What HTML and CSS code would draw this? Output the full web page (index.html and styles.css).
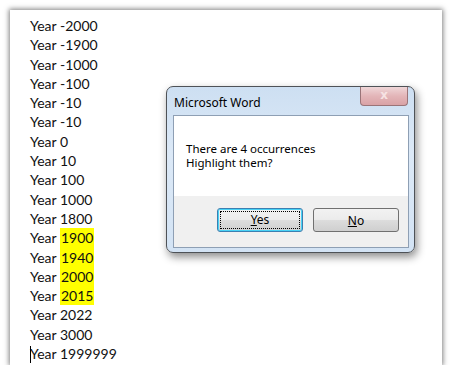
FILE: index.html
```html
<!DOCTYPE html>
<html lang="en">
<head>
    <meta charset="UTF-8">
    <title>Microsoft Word</title>
    <link rel="stylesheet" href="styles.css">
</head>
<body>
    <div class="sheet">
        <ul class="years">
            <li>Year -2000</li>
            <li>Year -1900</li>
            <li>Year -1000</li>
            <li>Year -100</li>
            <li>Year -10</li>
            <li>Year -10</li>
            <li>Year 0</li>
            <li>Year 10</li>
            <li>Year 100</li>
            <li>Year 1000</li>
            <li>Year 1800</li>
            <li>Year <span class="hl">1900</span></li>
            <li>Year <span class="hl">1940</span></li>
            <li>Year <span class="hl">2000</span></li>
            <li>Year <span class="hl">2015</span></li>
            <li>Year 2022</li>
            <li>Year 3000</li>
            <li><span class="caret"></span>Year 1999999</li>
        </ul>
    </div>

    <div class="dialog">
        <div class="titlebar">
            <span class="title">Microsoft Word</span>
            <span class="close">x</span>
        </div>
        <div class="body">
            <div class="message">
                There are 4 occurrences<br>
                Highlight them?
            </div>
            <div class="buttons">
                <button class="btn default"><span><u>Y</u>es</span></button>
                <button class="btn"><u>N</u>o</button>
            </div>
        </div>
    </div>
</body>
</html>
```

FILE: styles.css
```css
body{
    margin: 0;
    background: #fff;
    font-family: "Lato", "Open Sans", sans-serif;
}
.sheet{
    margin: 10px 9px 0 10px;
    height: 355px;
    background: #fff;
    box-shadow: 0 0 5px 1px rgba(0, 0, 0, 0.5);
    padding: 6px 0 0 20px;
    box-sizing: border-box;
}
.years{
    list-style: none;
    margin: 0;
    padding: 0;
    font-size: 14px;
    color: #111;
}
.years li{
    height: 19.3px;
    line-height: 19.3px;
    position: relative;
}
.hl{
    background: #ffff00;
    display: inline-block;
    height: 19.3px;
    padding: 0 1px;
}
.caret{
    position: absolute;
    left: 0;
    top: 2px;
    width: 1px;
    height: 17px;
    background: #000;
}

/* message box */
.dialog{
    position: absolute;
    left: 166px;
    top: 86px;
    width: 249px;
    height: 167px;
    box-sizing: border-box;
    border: 1px solid #4e5257;
    border-radius: 7px;
    background: linear-gradient(#cddff2, #dce9f7 40%, #d3e3f4);
    box-shadow: 2px 4px 8px rgba(0, 0, 0, 0.45);
    padding: 0 5px 4px 6px;
    display: flex;
    flex-direction: column;
    font-family: "Noto Sans", "Open Sans", sans-serif;
}
.titlebar{
    height: 28px;
    display: flex;
    justify-content: space-between;
    align-items: flex-start;
}
.title{
    font-size: 12px;
    color: #000;
    padding: 7px 0 0 1px;
}
.close{
    width: 46px;
    height: 18px;
    margin-right: 1px;
    border: 1px solid #9a7478;
    border-top: none;
    border-radius: 0 0 4px 4px;
    background: linear-gradient(#efd6d8, #e3b5b8 50%, #d9a2a6);
    color: #f6e2e3;
    font-family: "DejaVu Sans", sans-serif;
    font-size: 12px;
    font-weight: bold;
    text-align: center;
    line-height: 16px;
}
.body{
    flex: 1;
    border: 1px solid #8e9fb4;
    background: #fff;
    display: flex;
    flex-direction: column;
}
.message{
    flex: 1;
    font-size: 11.5px;
    line-height: 13.5px;
    padding: 26px 0 0 12px;
    color: #000;
}
.buttons{
    height: 51px;
    box-sizing: border-box;
    background: #f0f0f0;
    display: flex;
    gap: 10px;
    padding: 12px 0 0 43px;
}
.btn{
    width: 86px;
    height: 24px;
    border: 1px solid #707070;
    border-radius: 3px;
    background: linear-gradient(#f2f2f2, #ebebeb 50%, #dddddd 50%, #cfcfcf);
    font-family: "Noto Sans", "Open Sans", sans-serif;
    font-size: 12px;
    color: #000;
    padding: 0;
}
.btn.default{
    border-color: #3c7fb1;
    box-shadow: inset 0 0 0 1px #48d2f5;
    padding: 2px;
}
.btn.default span{
    display: block;
    height: 100%;
    border: 1px dotted #000;
    box-sizing: border-box;
    line-height: 16px;
}
```
